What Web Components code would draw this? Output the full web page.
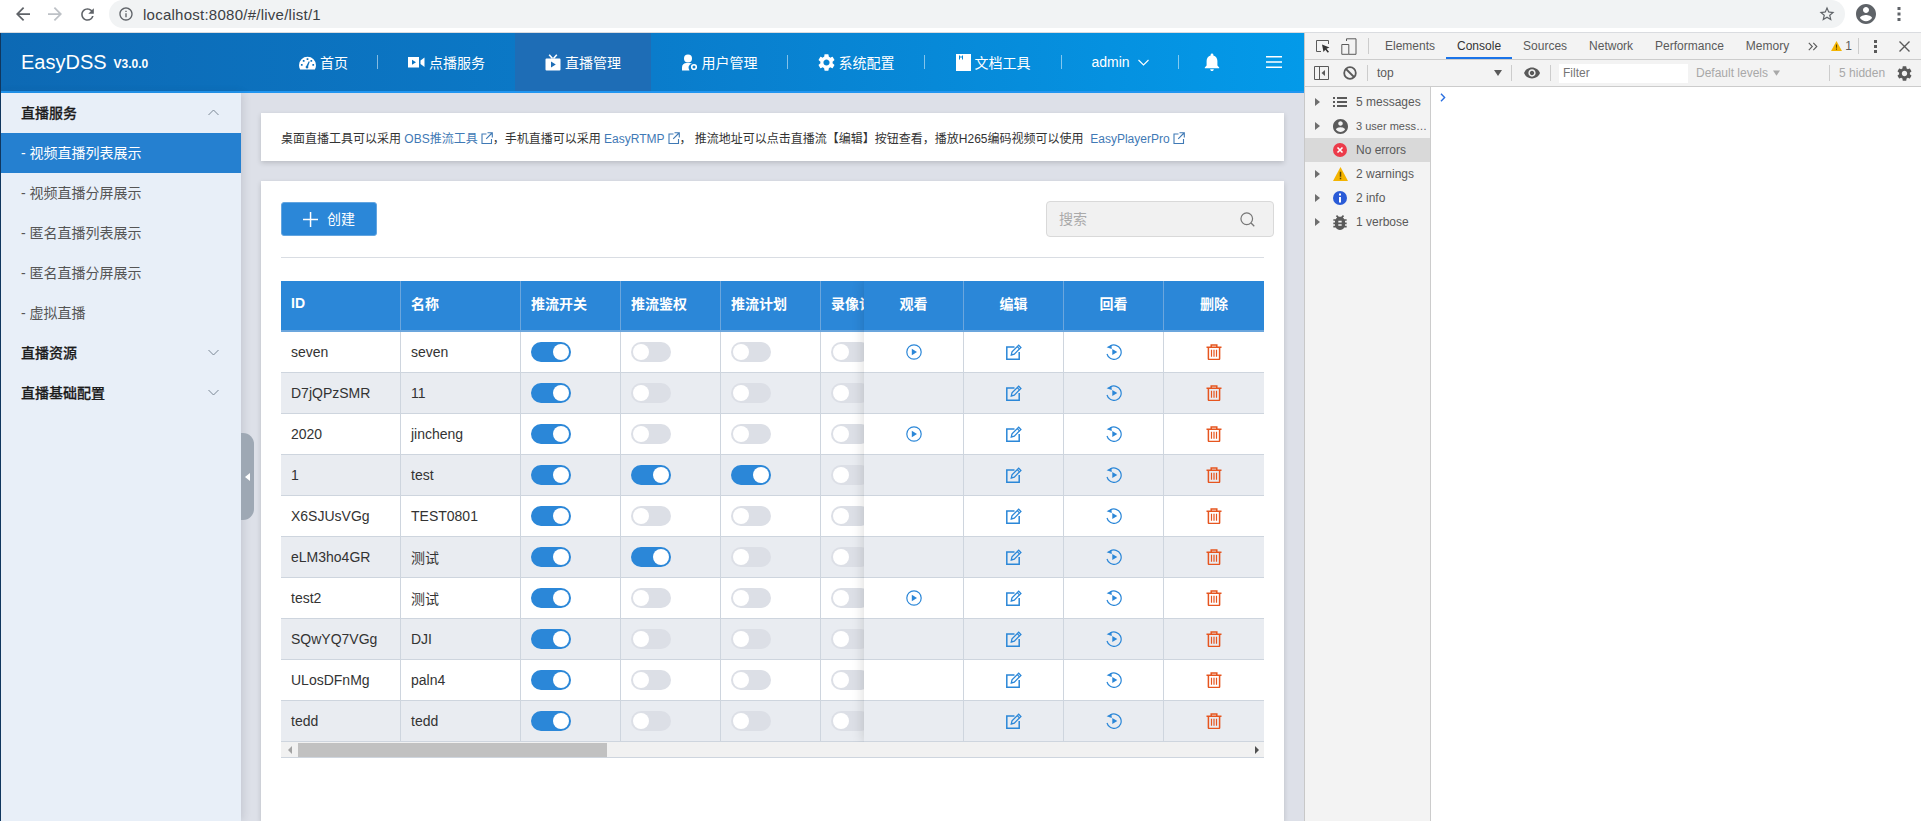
<!DOCTYPE html>
<html lang="zh">
<head>
<meta charset="utf-8">
<title>EasyDSS</title>
<style>
    html, body { margin: 0; padding: 0; height: 100%; overflow: hidden; background: #fff; }
    body {
        display: flex;
        flex-direction: column;
        width: 1921px;
        height: 821px;
        font-family: "Liberation Sans", "Noto Sans CJK SC", sans-serif;
    }
    .page { display: flex; height: 788px; }
    .app { display: flex; flex-direction: column; width: 1303px; height: 788px; border-left: 1px solid #10375f; overflow: hidden; }
    .app-body { display: flex; flex: 1; min-height: 0; }
</style>
</head>
<body>
<browser-bar url="localhost:8080/#/live/list/1"></browser-bar>
<div class="page">
    <div class="app">
        <dss-header>
            <nav-item icon="home" sep first>首页</nav-item>
            <nav-item icon="video">点播服务</nav-item>
            <nav-item icon="tv" active>直播管理</nav-item>
            <nav-item icon="user" sep>用户管理</nav-item>
            <nav-item icon="gear" sep>系统配置</nav-item>
            <nav-item icon="doc" sep>文档工具</nav-item>
            <nav-item icon="caret" sep narrow>admin</nav-item>
            <nav-item icon="bell" tiny></nav-item>
            <nav-item icon="menu" tiny2></nav-item>
        </dss-header>
        <div class="app-body">
            <side-menu>
                <menu-group open>直播服务</menu-group>
                <menu-link active>- 视频直播列表展示</menu-link>
                <menu-link>- 视频直播分屏展示</menu-link>
                <menu-link>- 匿名直播列表展示</menu-link>
                <menu-link>- 匿名直播分屏展示</menu-link>
                <menu-link>- 虚拟直播</menu-link>
                <menu-group>直播资源</menu-group>
                <menu-group>直播基础配置</menu-group>
            </side-menu>
            <main-panel>
                <notice-card>桌面直播工具可以采用 <ext-link>OBS推流工具</ext-link>，手机直播可以采用 <ext-link>EasyRTMP</ext-link>， 推流地址可以点击直播流【编辑】按钮查看，播放H265编码视频可以使用&nbsp; <ext-link>EasyPlayerPro</ext-link></notice-card>
                <list-card>
                    <stream-table></stream-table>
                </list-card>
            </main-panel>
        </div>
    </div>
    <dev-tools></dev-tools>
</div>

<script>
const ICONS = {
    home: '<svg viewBox="0 0 16 16" width="17" height="17"><path fill="#fff" fill-rule="evenodd" d="M8 2.500a8 8 0 0 0-8 8c0 1.500.4 2.800 1.100 4h13.800c.7-1.200 1.100-2.500 1.100-4a8 8 0 0 0-8-8zM7.200 4h1.600v1.600H7.200zM3.600 5.600h1.600v1.600H3.600zM10.800 5.600h1.600v1.600h-1.600zM1.800 9.400h1.600V11H1.800zM12.600 9.400h1.600V11h-1.600zM6.900 11.200l2.300-4.400.9.4-1.500 4.400a1.300 1.300 0 1 1-1.700-.4z"/></svg>',
    video: '<svg viewBox="0 0 17 16" width="17" height="16"><path fill="#fff" fill-rule="evenodd" d="M0 3h11v10.500H0zM4 5.800v5l4-2.500z"/><path fill="#fff" d="M12.500 6.500 16.500 3.500v9.500l-4-3z"/></svg>',
    tv: '<svg viewBox="0 0 16 17" width="16" height="17"><path fill="#fff" fill-rule="evenodd" d="M1.500 4.500h13a1 1 0 0 1 1 1v10a1 1 0 0 1-1 1h-13a1 1 0 0 1-1-1v-10a1 1 0 0 1 1-1zM6 7.500v6l4.800-3z"/><path stroke="#fff" stroke-width="1.600" fill="none" d="M4.200.8 7.500 4.500M11.800.8 8.500 4.500"/></svg>',
    user: '<svg viewBox="0 0 17 17" width="17" height="17"><circle cx="7" cy="4.500" r="4" fill="#fff"/><path fill="#fff" d="M1 16.500v-3C1 10.500 3 9 5.500 9h3c1 0 1.800.2 2.500.6a4.200 4.200 0 0 0-2.500 6.900z"/><circle cx="13" cy="13" r="2.300" fill="none" stroke="#fff" stroke-width="1.600"/></svg>',
    gear: '<svg viewBox="2 2 20 20" width="17" height="17"><path fill="#fff" d="M19.140 12.940c.04-.3.06-.61.06-.94 0-.32-.02-.64-.07-.94l2.030-1.580a.49.49 0 0 0 .12-.61l-1.920-3.320a.488.488 0 0 0-.59-.22l-2.390.96c-.5-.38-1.030-.7-1.620-.94l-.36-2.540a.484.484 0 0 0-.48-.41h-3.840c-.24 0-.43.17-.47.41l-.36 2.540c-.59.24-1.130.57-1.620.94l-2.390-.96c-.22-.08-.47 0-.59.22L2.740 8.870c-.12.21-.08.47.12.61l2.030 1.580c-.05.3-.09.63-.09.94s.02.64.07.94l-2.030 1.580a.49.49 0 0 0-.12.61l1.920 3.320c.12.22.37.29.59.22l2.390-.96c.5.38 1.030.7 1.620.94l.36 2.540c.05.24.24.41.48.41h3.840c.24 0 .44-.17.47-.41l.36-2.540c.59-.24 1.130-.56 1.620-.94l2.390.96c.22.08.47 0 .59-.22l1.920-3.320c.12-.22.07-.47-.12-.61l-2.010-1.580zM12 15.600c-1.980 0-3.600-1.620-3.600-3.600s1.620-3.600 3.600-3.600 3.600 1.620 3.600 3.600-1.620 3.600-3.600 3.600z"/></svg>',
    doc: '<svg viewBox="0 0 15 17" width="15" height="17"><path fill="#fff" fill-rule="evenodd" d="M0 0h15v17H0zM3 1.500v4h1V3.500h2v2h1v-4H6v1H4v-1z"/></svg>',
    bell: '<svg viewBox="4 2 16 20" width="16" height="18"><path fill="#fff" d="M12 22c1.100 0 2-.9 2-2h-4c0 1.100.9 2 2 2zm6-6v-5c0-3.070-1.630-5.640-4.500-6.320V4c0-.83-.67-1.500-1.500-1.500s-1.500.67-1.500 1.500v.68C7.640 5.360 6 7.920 6 11v5l-2 2v1h16v-1l-2-2z"/></svg>',
    menu: '<svg viewBox="0 0 16 12" width="16" height="12"><path fill="#fff" d="M0 0h16v1.600H0zM0 5.200h16v1.600H0zM0 10.400h16V12H0z"/></svg>',
    caret: '<svg viewBox="0 0 11 7" width="11" height="7"><path fill="none" stroke="#fff" stroke-width="1.100" d="M.5 1l5 5 5-5"/></svg>',
    play: '<svg viewBox="0 0 16 16" width="16" height="16"><circle cx="8" cy="8" r="7.200" fill="none" stroke="#2b87d8" stroke-width="1.200"/><path fill="#2b87d8" d="M5.800 4.800 11 8l-5.200 3.200z"/></svg>',
    edit: '<svg viewBox="0 0 16 16" width="16" height="16"><path fill="none" stroke="#2b87d8" stroke-width="1.500" d="M8.500 3H.8v12.200h12.400V8"/><path fill="none" stroke="#2b87d8" stroke-width="1.300" d="M5.300 11l.7-3.100L12.700 1.200l2.200 2.200L8.300 10.100z"/><path stroke="#2b87d8" stroke-width="1.200" d="M11.300 2.600l2.200 2.200"/></svg>',
    replay: '<svg viewBox="0 0 16 16" width="16" height="16"><path fill="none" stroke="#2b87d8" stroke-width="1.200" d="M4.300 2A7.200 7.200 0 1 1 1 10"/><path fill="#2b87d8" d="M.6 3.200 5.400.8l.4 4.300zM6.300 5l5 3-5 3z"/></svg>',
    trash: '<svg viewBox="0 0 16 16" width="16" height="16"><g fill="none" stroke="#e6551f" stroke-width="1.500"><path d="M.5 3.300h15M5.200 3V.9h5.600V3M2.400 3.500v11.200c0 .4.300.7.700.7h9.800c.4 0 .7-.3.700-.7V3.500"/><path stroke-width="1.200" d="M5.500 5.800v7M8 5.800v7M10.500 5.800v7"/></g></svg>',
    search: '<svg viewBox="0 0 16 16" width="15" height="15"><circle cx="7.200" cy="7.200" r="6.200" fill="none" stroke="#777" stroke-width="1.300"/><path stroke="#777" stroke-width="1.400" d="M11.800 11.800l3.400 3.400"/></svg>',
    plus: '<svg viewBox="0 0 15 15" width="15" height="15"><path fill="#fff" d="M6.800 0h1.500v6.800H15v1.500H8.300V15H6.800V8.300H0V6.800h6.800z"/></svg>',
    ext: '<svg viewBox="0 0 12 12" width="12" height="12"><path fill="none" stroke="#3f79b5" stroke-width="1.100" d="M5.500 2H1v9.500h9.500V7M6.500.7h4.800v4.800M11 1 5.200 6.800"/></svg>'
};

class BrowserBar extends HTMLElement {
    constructor() {
        super();
        this.attachShadow({ mode: "open" });
    }
    getStyles() {
        return `
            <style>
                :host { display: block; height: 33px; background: #fff; border-bottom: 1px solid #dadce0; box-sizing: border-box; }
                .row { display: flex; align-items: flex-start; height: 28px; }
                .btn { flex: 0 0 32px; height: 28px; display: flex; align-items: center; justify-content: center; }
                .lead { width: 7px; }
                .omni {
                    flex: 0 0 1736px; height: 28px; margin-left: 6px; background: #f1f3f4;
                    border-radius: 14px; display: flex; align-items: center; box-sizing: border-box;
                    padding-left: 9px; font-size: 15px; color: #3c4043; letter-spacing: .25px;
                }
                .omni span { margin-left: 9px; flex: 1; }
                svg { display: block; }
            </style>
        `;
    }
    render() {
        this.shadowRoot.innerHTML = `
            ${this.getStyles()}
            <div class="row">
                <div class="lead"></div>
                <div class="btn"><svg viewBox="0 0 16 16" width="14" height="14"><path fill="#5f6368" d="M16 7H3.800l5.600-5.600L8 0 0 8l8 8 1.400-1.400L3.800 9H16z"/></svg></div>
                <div class="btn"><svg viewBox="0 0 16 16" width="14" height="14"><path fill="#bdc1c6" d="M0 7h12.200L6.600 1.400 8 0l8 8-8 8-1.400-1.400L12.200 9H0z"/></svg></div>
                <div class="btn"><svg viewBox="0 0 24 24" width="19" height="19"><path fill="#5f6368" d="M17.650 6.350A7.958 7.958 0 0 0 12 4c-4.420 0-7.990 3.580-7.990 8s3.570 8 7.990 8c3.730 0 6.840-2.550 7.730-6h-2.080A5.990 5.990 0 0 1 12 18c-3.310 0-6-2.690-6-6s2.690-6 6-6c1.660 0 3.140.69 4.220 1.780L13 11h7V4l-2.350 2.350z"/></svg></div>
                <div class="omni">
                    <svg viewBox="0 0 24 24" width="16" height="16"><path fill="#5f6368" d="M11 7h2v2h-2zm0 4h2v6h-2zm1-9C6.480 2 2 6.480 2 12s4.480 10 10 10 10-4.480 10-10S17.520 2 12 2zm0 18c-4.410 0-8-3.590-8-8s3.590-8 8-8 8 3.590 8 8-3.590 8-8 8z"/></svg>
                    <span>${this.getAttribute('url')}</span>
                    <svg viewBox="0 0 24 24" width="18" height="18" style="margin-right:9px"><path fill="#5f6368" d="M22 9.240l-7.190-.62L12 2 9.190 8.630 2 9.240l5.460 4.730L5.820 21 12 17.270 18.180 21l-1.630-7.030L22 9.240zM12 15.400l-3.760 2.270 1-4.280-3.320-2.880 4.380-.38L12 6.100l1.710 4.040 4.380.38-3.320 2.880 1 4.280L12 15.400z"/></svg>
                </div>
                <div class="btn" style="flex-basis:42px"><svg viewBox="0 0 24 24" width="24" height="24"><path fill="#5f6368" d="M12 2C6.480 2 2 6.480 2 12s4.480 10 10 10 10-4.480 10-10S17.520 2 12 2zm0 3c1.660 0 3 1.340 3 3s-1.340 3-3 3-3-1.340-3-3 1.340-3 3-3zm0 14.200c-2.500 0-4.710-1.280-6-3.220.03-1.990 4-3.080 6-3.080 1.990 0 5.970 1.090 6 3.080-1.290 1.940-3.500 3.220-6 3.220z"/></svg></div>
                <div class="btn" style="flex-basis:24px"><svg viewBox="0 0 4 14" width="4" height="14"><path fill="#5f6368" d="M.5 0h3v3h-3zM.5 5.500h3v3h-3zM.5 11h3v3h-3z"/></svg></div>
            </div>
        `;
    }
    connectedCallback() {
        this.render();
    }
}
customElements.define('browser-bar', BrowserBar);

class DssHeader extends HTMLElement {
    constructor() {
        super();
        this.attachShadow({ mode: "open" });
    }
    connectedCallback() {
        this.shadowRoot.innerHTML = `
            <style>
                :host {
                    display: flex; flex: 0 0 60px; box-sizing: border-box; height: 60px;
                    background: linear-gradient(90deg, #0d69b4 0%, #0a7ccb 50%, #039ae9 100%);
                    border-bottom: 2px solid #2196f0; color: #fff;
                }
                .logo { flex: 0 0 240px; box-sizing: border-box; padding: 0 0 0 20px; display: flex; align-items: center; height: 58px; }
                .logo b { font-weight: 400; font-size: 20px; }
                .logo i { font-style: normal; font-weight: 700; font-size: 12px; margin: 3px 0 0 7px; }
                .nav { display: flex; flex: 1; height: 58px; }
            </style>
            <div class="logo"><b>EasyDSS</b><i>V3.0.0</i></div>
            <div class="nav"><slot></slot></div>
        `;
    }
}
customElements.define('dss-header', DssHeader);

class NavItem extends HTMLElement {
    constructor() {
        super();
        this.attachShadow({ mode: "open" });
    }
    connectedCallback() {
        const isCaret = this.getAttribute('icon') === 'caret';
        const icon = ICONS[this.getAttribute('icon')];
        this.shadowRoot.innerHTML = `
            <style>
                :host { display: flex; flex: 0 0 137px; align-items: center; height: 58px; font-size: 14px; color: #fff; }
                :host([first]) .in { padding-left: 29px; }
                :host([active]) { background: #1e6db6; flex-basis: 136px; }
                :host([narrow]) { flex-basis: 117px; }
                :host([tiny]) { flex-basis: 66px; }
                :host([tiny2]) { flex-basis: 58px; }
                .in { display: flex; align-items: center; justify-content: center; width: 100%; height: 14px; box-sizing: border-box; gap: 4px; }
                :host([sep]) .in { border-right: 1px solid rgba(255,255,255,.5); }
                .gap { gap: 8px; }
                svg { display: block; }
            </style>
            <div class="in ${isCaret ? 'gap' : ''}">
                ${isCaret ? '' : icon}
                <slot></slot>
                ${isCaret ? icon : ''}
            </div>
        `;
    }
}
customElements.define('nav-item', NavItem);

class SideMenu extends HTMLElement {
    constructor() {
        super();
        this.attachShadow({ mode: "open" });
    }
    connectedCallback() {
        this.shadowRoot.innerHTML = `
            <style>
                :host {
                    display: block; flex: 0 0 240px; background: #e8eff8; position: relative; z-index: 2;
                    box-shadow: 2px 0 8px rgba(40,50,70,.14);
                }
            </style>
            <slot></slot>
        `;
    }
}
customElements.define('side-menu', SideMenu);

class MenuGroup extends HTMLElement {
    constructor() {
        super();
        this.attachShadow({ mode: "open" });
    }
    connectedCallback() {
        const d = this.hasAttribute('open') ? 'M.5 6l5-5 5 5' : 'M.5 1l5 5 5-5';
        this.shadowRoot.innerHTML = `
            <style>
                :host { display: flex; align-items: center; justify-content: space-between; box-sizing: border-box; height: 40px; padding: 0 22px 2px 20px; font-size: 14px; font-weight: 500; color: #1b1b1b; -webkit-text-stroke: .25px #1b1b1b; }
                svg { display: block; }
            </style>
            <slot></slot>
            <svg viewBox="0 0 11 7" width="11" height="7"><path fill="none" stroke="#7b8794" d="${d}"/></svg>
        `;
    }
}
customElements.define('menu-group', MenuGroup);

class MenuLink extends HTMLElement {
    constructor() {
        super();
        this.attachShadow({ mode: "open" });
    }
    connectedCallback() {
        this.shadowRoot.innerHTML = `
            <style>
                :host { display: flex; align-items: center; box-sizing: border-box; height: 40px; padding: 0 0 2px 20px; font-size: 14px; color: #555; }
                :host([active]) { background: #2580d0; color: #fff; }
            </style>
            <slot></slot>
        `;
    }
}
customElements.define('menu-link', MenuLink);

class MainPanel extends HTMLElement {
    constructor() {
        super();
        this.attachShadow({ mode: "open" });
    }
    connectedCallback() {
        this.shadowRoot.innerHTML = `
            <style>
                :host { display: flex; flex-direction: column; gap: 20px; flex: 1; min-width: 0; box-sizing: border-box; padding: 20px 20px 0 20px; background: #dde0e8; position: relative; overflow: hidden; }
                .handle {
                    position: absolute; left: 0; top: 340px; width: 13px; height: 87px; background: #9ea8b4;
                    border-radius: 0 11px 11px 0; z-index: 3; display: flex; align-items: center; justify-content: center;
                }
                .handle::before { content: ""; border: 4px solid transparent; border-right: 5px solid #fff; border-left: 0; }
            </style>
            <slot></slot>
            <div class="handle"></div>
        `;
    }
}
customElements.define('main-panel', MainPanel);

class NoticeCard extends HTMLElement {
    constructor() {
        super();
        this.attachShadow({ mode: "open" });
    }
    connectedCallback() {
        this.shadowRoot.innerHTML = `
            <style>
                :host { display: flex; align-items: center; flex: 0 0 48px; box-sizing: border-box; padding-left: 20px; background: #fff; box-shadow: 0 2px 5px rgba(0,0,0,.16); font-size: 12px; color: #333; white-space: nowrap; }
            </style>
            <div><slot></slot></div>
        `;
    }
}
customElements.define('notice-card', NoticeCard);

class ExtLink extends HTMLElement {
    constructor() {
        super();
        this.attachShadow({ mode: "open" });
    }
    connectedCallback() {
        this.shadowRoot.innerHTML = `<style>
                :host { display: inline; color: #3f79b5; }
                svg { vertical-align: -1px; margin-left: 3px; }
            </style><slot></slot>${ICONS.ext}`;
    }
}
customElements.define('ext-link', ExtLink);

class ListCard extends HTMLElement {
    constructor() {
        super();
        this.attachShadow({ mode: "open" });
    }
    connectedCallback() {
        this.shadowRoot.innerHTML = `
            <style>
                :host { display: block; flex: 1; box-sizing: border-box; padding: 20px 20px 0; background: #fff; box-shadow: 0 2px 5px rgba(0,0,0,.16); }
                .tools { display: flex; justify-content: space-between; align-items: flex-start; height: 56px; border-bottom: 1px solid #d9dde3; margin-bottom: 23px; }
                .add {
                    display: flex; align-items: center; justify-content: center; gap: 9px; box-sizing: border-box;
                    width: 96px; height: 34px; margin-top: 1px; background: #2b87d8; border: 1px solid #63a5e0; border-radius: 3px;
                    color: #fff; font-size: 14px;
                }
                .search {
                    display: flex; align-items: center; justify-content: space-between; box-sizing: border-box;
                    width: 228px; height: 36px; margin-right: -10px; padding: 0 18px 0 12px; background: #f1f1f1;
                    border: 1px solid #d9d9d9; border-radius: 4px; color: #aaa; font-size: 14px;
                }
                span { margin-top: -2px; }
                svg { display: block; }
            </style>
            <div class="tools">
                <div class="add">${ICONS.plus}<span>创建</span></div>
                <div class="search"><span>搜索</span>${ICONS.search}</div>
            </div>
            <slot></slot>
        `;
    }
}
customElements.define('list-card', ListCard);

class ToggleSwitch extends HTMLElement {
    constructor() {
        super();
        this.attachShadow({ mode: "open" });
    }
    connectedCallback() {
        this.shadowRoot.innerHTML = `
            <style>
                :host { display: flex; box-sizing: border-box; width: 40px; height: 20px; padding: 2px; background: #dcdfe6; border-radius: 10px; }
                :host([on]) { background: #2b87d8; justify-content: flex-end; }
                i { display: block; width: 16px; height: 16px; background: #fff; border-radius: 50%; }
            </style>
            <i></i>
        `;
    }
}
customElements.define('toggle-switch', ToggleSwitch);

class StreamTable extends HTMLElement {
    constructor() {
        super();
        this.attachShadow({ mode: "open" });
    }
    getRows() {
        return [
            { id: 'seven', name: 'seven', push: 1, auth: 0, plan: 0, watch: 1 },
            { id: 'D7jQPzSMR', name: '11', push: 1, auth: 0, plan: 0, watch: 0 },
            { id: '2020', name: 'jincheng', push: 1, auth: 0, plan: 0, watch: 1 },
            { id: '1', name: 'test', push: 1, auth: 1, plan: 1, watch: 0 },
            { id: 'X6SJUsVGg', name: 'TEST0801', push: 1, auth: 0, plan: 0, watch: 0 },
            { id: 'eLM3ho4GR', name: '测试', push: 1, auth: 1, plan: 0, watch: 0 },
            { id: 'test2', name: '测试', push: 1, auth: 0, plan: 0, watch: 1 },
            { id: 'SQwYQ7VGg', name: 'DJI', push: 1, auth: 0, plan: 0, watch: 0 },
            { id: 'ULosDFnMg', name: 'paln4', push: 1, auth: 0, plan: 0, watch: 0 },
            { id: 'tedd', name: 'tedd', push: 1, auth: 0, plan: 0, watch: 0 }
        ];
    }
    getStyles() {
        return `
            <style>
                :host { display: block; width: 983px; font-size: 14px; color: #333; }
                .wrap { position: relative; height: 461px; overflow: hidden; }
                .row { display: grid; grid-template-columns: 120px 120px 100px 100px 100px 100px 100px 100px 100px; width: 1500px; height: 41px; box-sizing: border-box; border-bottom: 1px solid #ced5de; }
                .row.head, .fixed .head { height: 51px; background: #2b87d8; color: #fff; font-weight: 700; border-bottom: 2px solid #6ba6dd; }
                .row:nth-child(odd):not(.head) { background: #e9ecf1; }
                .cell { display: flex; align-items: center; box-sizing: border-box; padding-left: 10px; border-right: 1px solid #ced5de; white-space: nowrap; overflow: hidden; }
                .head .cell { border-right-color: #6ba6dd; padding-bottom: 5px; }
                .fixed { position: absolute; top: 0; right: 0; width: 400px; background: #fff; box-shadow: 0 0 12px rgba(0,0,0,.16); }
                .fixed .row { grid-template-columns: 100px 100px 100px 100px; width: 400px; }
                .fixed .cell { justify-content: center; padding-left: 0; }
                .fixed .cell:last-child { border-right: 0; }
                .bar { display: flex; align-items: center; height: 16px; box-sizing: border-box; background: #f1f1f1; border-bottom: 1px solid #ced5de; }
                .bar .l { flex: 0 0 17px; display: flex; justify-content: center; }
                .bar .l::before { content: ""; border: 4px solid transparent; border-right: 4px solid #a3a3a3; border-left: 0; }
                .bar .thumb { flex: 0 0 309px; height: 14px; background: #c1c1c1; }
                .bar .r { flex: 1; display: flex; justify-content: flex-end; padding-right: 5px; }
                .bar .r::before { content: ""; border: 4px solid transparent; border-left: 4px solid #505050; border-right: 0; }
                svg { display: block; }
            </style>
        `;
    }
    render() {
        const rows = this.getRows();
        const sw = (on) => `<toggle-switch ${on ? 'on' : ''}></toggle-switch>`;
        const left = rows.map(r => `
            <div class="row">
                <div class="cell">${r.id}</div>
                <div class="cell">${r.name}</div>
                <div class="cell">${sw(r.push)}</div>
                <div class="cell">${sw(r.auth)}</div>
                <div class="cell">${sw(r.plan)}</div>
                <div class="cell">${sw(0)}</div>
                <div class="cell"></div><div class="cell"></div><div class="cell"></div>
            </div>`).join('');
        const right = rows.map(r => `
            <div class="row">
                <div class="cell">${r.watch ? ICONS.play : ''}</div>
                <div class="cell">${ICONS.edit}</div>
                <div class="cell">${ICONS.replay}</div>
                <div class="cell">${ICONS.trash}</div>
            </div>`).join('');
        this.shadowRoot.innerHTML = `
            ${this.getStyles()}
            <div class="wrap">
                <div class="body">
                    <div class="row head">
                        <div class="cell">ID</div><div class="cell">名称</div><div class="cell">推流开关</div>
                        <div class="cell">推流鉴权</div><div class="cell">推流计划</div><div class="cell">录像计划</div>
                        <div class="cell"></div><div class="cell"></div><div class="cell"></div>
                    </div>
                    ${left}
                </div>
                <div class="fixed">
                    <div class="row head">
                        <div class="cell">观看</div><div class="cell">编辑</div><div class="cell">回看</div><div class="cell">删除</div>
                    </div>
                    ${right}
                </div>
            </div>
            <div class="bar"><span class="l"></span><span class="thumb"></span><span class="r"></span></div>
        `;
    }
    connectedCallback() {
        this.render();
    }
}
customElements.define('stream-table', StreamTable);

class DevTools extends HTMLElement {
    constructor() {
        super();
        this.attachShadow({ mode: "open" });
    }
    getStyles() {
        return `
            <style>
                :host { display: flex; flex-direction: column; flex: 0 0 617px; box-sizing: border-box; height: 788px; border-left: 1px solid #c8c8c8; background: #fff; font-size: 12px; color: #5a5a5a; }
                .bar { display: flex; align-items: center; flex: 0 0 27px; box-sizing: border-box; background: #f3f3f3; border-bottom: 1px solid #ccc; }
                .sep { flex: 0 0 1px; height: 16px; background: #ccc; }
                .tab { display: flex; align-items: center; height: 26px; padding: 0 11px; box-sizing: border-box; }
                .tab.on { color: #333; border-bottom: 2px solid #1a73e8; padding-top: 2px; }
                .filter { flex: 0 0 129px; height: 19px; margin-left: 8px; background: #fff; display: flex; align-items: center; padding-left: 4px; box-sizing: border-box; color: #757575; }
                .dim { color: #a8a8a8; }
                .panes { display: flex; flex: 1; min-height: 0; }
                .side { flex: 0 0 126px; min-width: 0; overflow: hidden; box-sizing: border-box; padding-top: 3px; background: #f3f3f3; border-right: 1px solid #ccc; }
                .item { display: flex; align-items: center; height: 24px; }
                .item.on { background: #d9d9d9; }
                .tri { flex: 0 0 27px; display: flex; box-sizing: border-box; padding-left: 10px; }
                .tri::before { content: ""; border: 4px solid transparent; border-left: 5px solid #6e6e6e; border-right: 0; }
                .on .tri::before { border-left-color: transparent; }
                .ico { flex: 0 0 16px; display: flex; justify-content: center; margin-right: 8px; }
                .item span:last-child { white-space: nowrap; }
                .item span.small { font-size: 11px; }
                .prompt { padding: 6px 0 0 9px; }
                svg { display: block; }
            </style>
        `;
    }
    render() {
        const items = [
            ['5 messages', '<svg viewBox="0 0 14 10" width="14" height="10"><path fill="#5a5a5a" d="M0 0h2v2H0zM4 0h10v2H4zM0 4h2v2H0zM4 4h10v2H4zM0 8h2v2H0zM4 8h10v2H4z"/></svg>'],
            ['3 user mess…', '<svg viewBox="2 2 20 20" width="15" height="15"><path fill="#5a5a5a" d="M12 2C6.480 2 2 6.480 2 12s4.480 10 10 10 10-4.480 10-10S17.520 2 12 2zm0 3c1.660 0 3 1.340 3 3s-1.340 3-3 3-3-1.340-3-3 1.340-3 3-3zm0 14.200c-2.500 0-4.710-1.280-6-3.220.03-1.990 4-3.080 6-3.080 1.990 0 5.970 1.090 6 3.080-1.290 1.940-3.500 3.220-6 3.220z"/></svg>', false, 'small'],
            ['No errors', '<svg viewBox="0 0 14 14" width="14" height="14"><circle cx="7" cy="7" r="7" fill="#ec3b4a"/><path stroke="#fff" stroke-width="1.600" d="M4.500 4.500l5 5M9.500 4.500l-5 5"/></svg>', true],
            ['2 warnings', '<svg viewBox="0 0 14 13" width="15" height="14"><path fill="#f4b400" d="M7 0l7 13H0z"/><path fill="#5a4300" d="M6.300 4.500h1.400v4.500H6.300zM6.300 10h1.400v1.500H6.300z"/></svg>'],
            ['2 info', '<svg viewBox="0 0 14 14" width="14" height="14"><circle cx="7" cy="7" r="7" fill="#2a5bd7"/><path fill="#fff" d="M6 2.500h2v2H6zM6 6h2v5.500H6z"/></svg>'],
            ['1 verbose', '<svg viewBox="4 3 16 18" width="14" height="15"><path fill="#5a5a5a" d="M20 8h-2.810a5.985 5.985 0 0 0-1.820-1.960L17 4.410 15.590 3l-2.170 2.170C12.960 5.060 12.490 5 12 5c-.49 0-.96.06-1.410.17L8.410 3 7 4.410l1.620 1.630C7.880 6.550 7.260 7.220 6.810 8H4v2h2.090c-.05.33-.09.66-.09 1v1H4v2h2v1c0 .34.04.67.09 1H4v2h2.810c1.040 1.790 2.970 3 5.190 3s4.150-1.210 5.190-3H20v-2h-2.090c.05-.33.09-.66.09-1v-1h2v-2h-2v-1c0-.34-.04-.67-.09-1H20V8zm-6 8h-4v-2h4v2zm0-4h-4v-2h4v2z"/></svg>']
        ].map(it => `
            <div class="item ${it[2] ? 'on' : ''}"><span class="tri"></span><span class="ico">${it[1]}</span><span class="${it[3] || ''}">${it[0]}</span></div>`).join('');
        this.shadowRoot.innerHTML = `
            ${this.getStyles()}
            <div class="bar">
                <svg style="margin-left:10px" viewBox="0 0 16 16" width="16" height="16"><path fill="none" stroke="#5a5a5a" d="M6 13.500H1.500v-11h12V6"/><path fill="#333" d="M7 6.500l7.500 3-3 1.200 2.500 3-1.200 1-2.500-3L8.500 14z"/></svg>
                <svg style="margin-left:10px" viewBox="0 0 16 17" width="16" height="17"><path fill="none" stroke="#5a5a5a" d="M5.500 3V.8h9.500v15.500H8M.8 6.500h7v9.800h-7z"/></svg>
                <span class="sep" style="margin-left:11px"></span>
                <span style="width:5px"></span>
                <span class="tab">Elements</span><span class="tab on">Console</span><span class="tab">Sources</span>
                <span class="tab">Network</span><span class="tab">Performance</span><span class="tab">Memory</span>
                <svg style="margin-left:8px" viewBox="0 0 10 9" width="10" height="9"><path fill="none" stroke="#5a5a5a" stroke-width="1.100" d="M.8.8l3.500 3.700L.8 8.200M5.300.8l3.500 3.700-3.500 3.700"/></svg>
                <svg style="margin-left:13px" viewBox="0 0 12 11" width="11" height="10"><path fill="#f4b400" d="M6 0l6 11H0z"/><path fill="#5a4300" d="M5.400 3.800h1.200v3.700H5.400zM5.400 8.300h1.200v1.300H5.400z"/></svg>
                <span style="margin-left:3px">1</span>
                <span class="sep" style="margin-left:6px"></span>
                <svg style="margin-left:15px" viewBox="0 0 3 13" width="3" height="13"><path fill="#5a5a5a" d="M0 0h3v3H0zM0 5h3v3H0zM0 10h3v3H0z"/></svg>
                <svg style="margin-left:22px" viewBox="0 0 11 11" width="11" height="11"><path stroke="#5a5a5a" stroke-width="1.400" d="M.5.500l10 10M10.500.500l-10 10"/></svg>
            </div>
            <div class="bar">
                <svg style="margin-left:9px" viewBox="0 0 15 14" width="15" height="14"><path fill="none" stroke="#5a5a5a" d="M.5.500h14v13H.5zM5.500.5v13"/><path fill="#5a5a5a" d="M11 4v6L7.500 7z"/></svg>
                <svg style="margin-left:14px" viewBox="0 0 14 14" width="14" height="14"><circle cx="7" cy="7" r="5.800" fill="none" stroke="#5a5a5a" stroke-width="1.800"/><path stroke="#5a5a5a" stroke-width="1.800" d="M3 3l8 8"/></svg>
                <span class="sep" style="margin-left:10px"></span>
                <span style="margin-left:9px;flex:0 0 117px">top</span>
                <svg viewBox="0 0 8 6" width="8" height="6"><path fill="#5a5a5a" d="M0 0h8L4 6z"/></svg>
                <span class="sep" style="margin-left:9px"></span>
                <svg style="margin-left:12px" viewBox="1 4 22 16" width="16" height="12"><path fill="#5a5a5a" d="M12 4.500C7 4.500 2.730 7.610 1 12c1.730 4.390 6 7.500 11 7.500s9.270-3.110 11-7.500c-1.730-4.390-6-7.500-11-7.500zM12 17c-2.760 0-5-2.240-5-5s2.240-5 5-5 5 2.240 5 5-2.240 5-5 5zm0-8c-1.660 0-3 1.340-3 3s1.340 3 3 3 3-1.340 3-3-1.340-3-3-3z"/></svg>
                <span class="sep" style="margin-left:10px"></span>
                <span class="filter">Filter</span>
                <span class="dim" style="margin-left:8px">Default levels</span>
                <svg style="margin-left:5px" viewBox="0 0 8 6" width="7" height="6"><path fill="#a8a8a8" d="M0 0h8L4 6z"/></svg>
                <span class="sep" style="margin-left:49px"></span>
                <span class="dim" style="margin-left:9px">5 hidden</span>
                <svg style="margin-left:12px" viewBox="2 2 20 20" width="15" height="15"><path fill="#5a5a5a" d="M19.140 12.940c.04-.3.06-.61.06-.94 0-.32-.02-.64-.07-.94l2.030-1.580a.49.49 0 0 0 .12-.61l-1.920-3.320a.488.488 0 0 0-.59-.22l-2.390.96c-.5-.38-1.030-.7-1.620-.94l-.36-2.540a.484.484 0 0 0-.48-.41h-3.840c-.24 0-.43.17-.47.41l-.36 2.540c-.59.24-1.130.57-1.620.94l-2.390-.96c-.22-.08-.47 0-.59.22L2.740 8.870c-.12.21-.08.47.12.61l2.030 1.580c-.05.3-.09.63-.09.94s.02.64.07.94l-2.030 1.580a.49.49 0 0 0-.12.61l1.920 3.320c.12.22.37.29.59.22l2.390-.96c.5.38 1.030.7 1.620.94l.36 2.540c.05.24.24.41.48.41h3.840c.24 0 .44-.17.47-.41l.36-2.540c.59-.24 1.130-.56 1.620-.94l2.390.96c.22.08.47 0 .59-.22l1.920-3.320c.12-.22.07-.47-.12-.61l-2.010-1.580zM12 15.600c-1.980 0-3.600-1.620-3.600-3.600s1.620-3.600 3.600-3.600 3.600 1.620 3.600 3.600-1.620 3.600-3.600 3.600z"/></svg>
            </div>
            <div class="panes">
                <div class="side">${items}</div>
                <div class="prompt"><svg viewBox="0 0 6 9" width="6" height="9"><path fill="none" stroke="#2a6fe0" stroke-width="1.400" d="M1 .8l3.600 3.700L1 8.200"/></svg></div>
            </div>
        `;
    }
    connectedCallback() {
        this.render();
    }
}
customElements.define('dev-tools', DevTools);
</script>
</body>
</html>
